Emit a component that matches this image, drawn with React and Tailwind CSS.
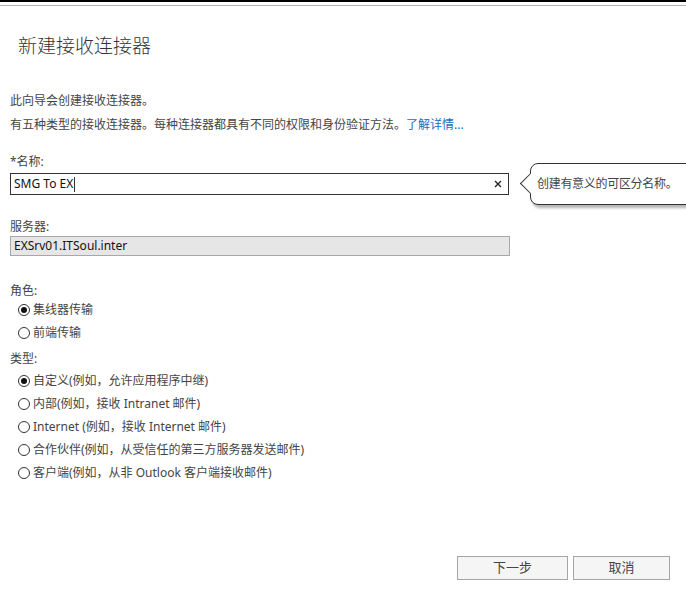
import React from "react";

const font = { fontFamily: '"Noto Sans", "Noto Sans CJK SC", sans-serif' };

function Radio({ checked, label }) {
  return (
    <div className="flex items-center h-[20px] pl-[8px] gap-[3px]">
      <span className="w-[12px] h-[12px] rounded-full border border-[#333] flex items-center justify-center bg-white">
        {checked && <span className="w-[6px] h-[6px] rounded-full bg-[#111]" />}
      </span>
      <span className="text-[12px] leading-[16px] text-[#444]">{label}</span>
    </div>
  );
}

export default function App() {
  return (
    <div className="w-[686px] h-[610px] bg-white overflow-hidden flex flex-col" style={font}>
      <div className="h-[2px] bg-black" />
      <div className="h-px mt-[3px] bg-[#b4b4b4]" />
      <div className="flex flex-col px-[10px]">
        <div className="mt-[26px] ml-[8px] text-[19px] leading-[28px] font-light text-[#333]">新建接收连接器</div>
        <div className="mt-[33px] text-[12px] leading-[16px] text-[#444]">此向导会创建接收连接器。</div>
        <div className="mt-[8px] text-[12px] leading-[16px] text-[#444]">
          有五种类型的接收连接器。每种连接器都具有不同的权限和身份验证方法。
          <span className="text-[#0f6fc6]">了解详情...</span>
        </div>
        <div className="mt-[21px] text-[12px] leading-[16px] text-[#444]">*名称:</div>
        <div className="mt-[3px] relative h-[22px]">
          <div className="w-[499px] h-[22px] border border-[#333] flex items-center pl-[3px] pr-[6px]">
            <span className="text-[12px] leading-[16px] text-[#111]">SMG To EX</span>
            <span className="w-px h-[15px] bg-[#333] ml-px" />
            <span className="flex-1" />
            <svg width="8" height="8" viewBox="0 0 8 8">
              <path d="M1 1 L7 7 M7 1 L1 7" stroke="#222" strokeWidth="1.4" />
            </svg>
          </div>
          <div className="absolute left-[520px] top-[-10px] w-[190px] h-[42px] rounded-[8px] border border-[#333] bg-white shadow-[2px_3px_3px_rgba(0,0,0,0.3)] flex items-center">
            <div className="absolute left-[-8px] top-[12px] w-[15px] h-[15px] rotate-45 bg-white border-l border-b border-[#333]" />
            <span className="relative ml-[6px] text-[12px] leading-[16px] tracking-[-0.3px] text-[#444]">创建有意义的可区分名称。</span>
          </div>
        </div>
        <div className="mt-[24px] text-[12px] leading-[16px] text-[#444]">服务器:</div>
        <div className="mt-[1px] w-[500px] h-[20px] border border-[#a8a8a8] bg-[#e6e6e6] flex items-center pl-[3px]">
          <span className="text-[12px] leading-[16px] text-[#111]">EXSrv01.ITSoul.inter</span>
        </div>
        <div className="mt-[27px] text-[12px] leading-[16px] text-[#444]">角色:</div>
        <div className="mt-px flex flex-col gap-[3px]">
          <Radio checked label="集线器传输" />
          <Radio label="前端传输" />
        </div>
        <div className="mt-[8px] text-[12px] leading-[16px] text-[#444]">类型:</div>
        <div className="mt-[4px] flex flex-col gap-[3px]">
          <Radio checked label="自定义(例如，允许应用程序中继)" />
          <Radio label="内部(例如，接收 Intranet 邮件)" />
          <Radio label="Internet (例如，接收 Internet 邮件)" />
          <Radio label="合作伙伴(例如，从受信任的第三方服务器发送邮件)" />
          <Radio label="客户端(例如，从非 Outlook 客户端接收邮件)" />
        </div>
        <div className="mt-[73px] flex justify-end gap-[5px] pr-[6px]">
          <button className="w-[111px] h-[24px] border border-[#a5a5a5] bg-[#f5f5f5] text-[13px] text-[#444] flex items-center justify-center">下一步</button>
          <button className="w-[97px] h-[24px] border border-[#a5a5a5] bg-[#f5f5f5] text-[13px] text-[#444] flex items-center justify-center">取消</button>
        </div>
      </div>
    </div>
  );
}
